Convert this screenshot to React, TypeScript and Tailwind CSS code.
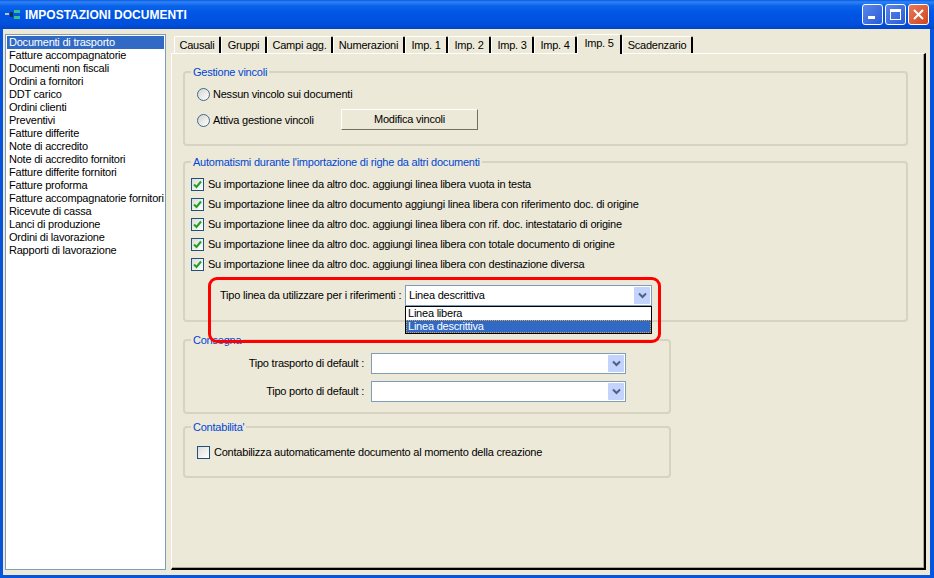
const docs = [
  "Documenti di trasporto", "Fatture accompagnatorie", "Documenti non fiscali", "Ordini a fornitori",
  "DDT carico", "Ordini clienti", "Preventivi", "Fatture differite", "Note di accredito",
  "Note di accredito fornitori", "Fatture differite fornitori", "Fatture proforma",
  "Fatture accompagnatorie fornitori", "Ricevute di cassa", "Lanci di produzione",
  "Ordini di lavorazione", "Rapporti di lavorazione",
];

const checks = [
  "Su importazione linee da altro doc. aggiungi linea libera vuota in testa",
  "Su importazione linee da altro documento aggiungi linea libera con riferimento doc. di origine",
  "Su importazione linee da altro doc. aggiungi linea libera con rif. doc. intestatario di origine",
  "Su importazione linee da altro doc. aggiungi linea libera con totale documento di origine",
  "Su importazione linee da altro doc. aggiungi linea libera con destinazione diversa",
];

const tabs: [string, number, boolean?][] = [
  ["Causali", 47], ["Gruppi", 46], ["Campi agg.", 66], ["Numerazioni", 72], ["Imp. 1", 43], ["Imp. 2", 43],
  ["Imp. 3", 43], ["Imp. 4", 43], ["Imp. 5", 45, true], ["Scadenzario", 71],
];

function Check({ checked = true }: { checked?: boolean }) {
  return (
    <span className="w-[13px] h-[13px] border border-[#1c5180] bg-gradient-to-br from-[#dcdcd7] to-white flex items-center justify-center shrink-0">
      {checked && (
        <svg width="9" height="9" viewBox="0 0 9 9">
          <path d="M1 4.5 L3.5 7 L8 1.5" fill="none" stroke="#21a121" strokeWidth="2" />
        </svg>
      )}
    </span>
  );
}

function Radio() {
  return <span className="w-[13px] h-[13px] rounded-full border border-[#3d6a92] bg-gradient-to-br from-[#d4d4cc] to-white shrink-0" />;
}

function Arrow() {
  return (
    <span className="w-[16px] h-[17px] bg-[#c3d3fb] rounded-[1px] flex items-center justify-center">
      <svg width="9" height="7" viewBox="0 0 9 7">
        <path d="M1 1.5 L4.5 5 L8 1.5" fill="none" stroke="#4d6185" strokeWidth="2" />
      </svg>
    </span>
  );
}

function Combo({ w, text }: { w: string; text?: string }) {
  return (
    <div className={`${w} h-[21px] border border-[#7f9db9] bg-white flex items-center justify-between pl-[3px] pr-[1px]`}>
      <span>{text}</span>
      <Arrow />
    </div>
  );
}

function Legend({ children }: { children: string }) {
  return <span className="absolute left-[6px] -top-[8px] bg-[#ece9d8] px-[2px] leading-[14px] text-[#0046d5] whitespace-nowrap">{children}</span>;
}

export default function App() {
  return (
    <div className="relative [font-family:'Liberation_Sans',Arial,sans-serif] w-[934px] h-[578px] overflow-hidden flex flex-col bg-[#0855dd] text-[11px] tracking-[-0.22px] text-black">
      <div className="h-[29px] shrink-0 flex items-center justify-between pl-[5px] pr-[5px] bg-[linear-gradient(to_bottom,#0a5ae0_0px,#2f83f5_2px,#0a62ea_6px,#0055e5_14px,#0050dc_24px,#0044c8_29px)]">
        <div className="flex items-center gap-[4px]">
          <svg width="16" height="12" viewBox="0 0 16 12">
            <rect x="0" y="4" width="4" height="2" fill="#b8c8d8" />
            <rect x="5" y="3" width="3" height="5" fill="#12304a" />
            <rect x="9" y="1" width="6" height="3" fill="#35c08a" />
            <rect x="9" y="7" width="6" height="3" fill="#35c08a" />
          </svg>
          <span className="text-white text-[12px] tracking-normal font-bold leading-none">IMPOSTAZIONI DOCUMENTI</span>
        </div>
        <div className="flex gap-[2px]">
          <div className="w-[21px] h-[21px] rounded-[3px] border border-white bg-gradient-to-br from-[#5a86ea] to-[#2a5bd8] flex items-end pl-[5px] pb-[5px]"><span className="w-[7px] h-[3px] bg-white" /></div>
          <div className="w-[21px] h-[21px] rounded-[3px] border border-white bg-gradient-to-br from-[#5a86ea] to-[#2a5bd8] flex items-center justify-center"><span className="w-[11px] h-[11px] border border-white border-t-[3px]" /></div>
          <div className="w-[21px] h-[21px] rounded-[3px] border border-white bg-gradient-to-br from-[#e8795a] to-[#cf4416] flex items-center justify-center">
            <svg width="11" height="11" viewBox="0 0 11 11"><path d="M1 1 L10 10 M10 1 L1 10" stroke="white" strokeWidth="2" /></svg>
          </div>
        </div>
      </div>

      <div className="h-[546px] ml-[3px] mr-[4px] bg-[#ece9d8] flex pl-[2px] pt-[5px] pb-[5px]">
        <div className="w-[161px] border border-[#7f9db9] bg-white p-[1px] leading-[13px] whitespace-nowrap overflow-hidden shrink-0">
          {docs.map((d, i) => (
            <div key={d} className={`h-[13px] pl-[2px] ${i === 0 ? "bg-[#316ac5] text-white" : ""}`}>{d}</div>
          ))}
        </div>

        <div className="ml-[5px] w-[755px] flex flex-col">
          <div className="h-[19px] flex pl-[3px] items-end">
            {tabs.map(([t, w, active]) => (
              <div key={t} style={{ width: w }} className={`flex items-center justify-center border-t border-l border-white border-r-2 border-r-black rounded-t-[2px] leading-none whitespace-nowrap ${active ? "relative z-10 h-[20px] -mb-px pb-[2px] bg-[#ece9d8]" : "h-[17px]"}`}>{t}</div>
            ))}
          </div>
          <div className="flex-1 border-t border-l border-white border-r-2 border-r-black border-b-2 border-b-black shadow-[inset_-1px_-1px_0_#aca899] pl-[11px] pt-[17px] flex flex-col items-start">
            <fieldset className="relative w-[725px] h-[75px] border-2 border-[#d6d3c2] rounded-[4px] pl-[12px] pt-[15px]">
              <Legend>Gestione vincoli</Legend>
              <div className="h-[13px] flex items-center gap-[3px]"><Radio /><span>Nessun vincolo sui documenti</span></div>
              <div className="mt-[8px] h-[21px] flex items-center">
                <div className="w-[144px] mt-[2px] flex items-center gap-[3px]"><Radio /><span>Attiva gestione vincoli</span></div>
                <button className="w-[137px] h-[21px] bg-[#ece9d8] border border-t-white border-l-white border-r-[#716f64] border-b-[#716f64] text-center">Modifica vincoli</button>
              </div>
            </fieldset>

            <fieldset className="relative mt-[15px] w-[725px] h-[161px] border-2 border-[#d6d3c2] rounded-[4px] pl-[6px] pt-[11px]">
              <Legend>Automatismi durante l'importazione di righe da altri documenti</Legend>
              {checks.map((c) => (
                <div key={c} className="h-[20px] flex items-center gap-[4px] whitespace-nowrap"><Check /><span>{c}</span></div>
              ))}
              <div className="mt-[11px] ml-[29px] flex items-center whitespace-nowrap">
                <span className="w-[180px] text-right">Tipo linea da utilizzare per i riferimenti :</span>
                <div className="relative ml-[5px] z-10">
                  <Combo w="w-[247px]" text="Linea descrittiva" />
                  <div className="absolute left-0 top-[21px] w-[247px] h-[28px] border border-black bg-white leading-[13px]">
                    <div className="h-[13px] pl-[2px]">Linea libera</div>
                    <div className="h-[13px] pl-[2px] bg-[#316ac5] text-white outline-1 -outline-offset-1 outline-dotted outline-[#e8a33a]">Linea descrittiva</div>
                  </div>
                </div>
              </div>
            </fieldset>

            <fieldset className="relative mt-[17px] w-[488px] h-[75px] border-2 border-[#d6d3c2] rounded-[4px] pt-[12px]">
              <Legend>Consegna</Legend>
              <div className="flex items-center justify-end pr-[43px] gap-[7px]"><span>Tipo trasporto di default :</span><Combo w="w-[255px]" /></div>
              <div className="flex items-center justify-end pr-[43px] gap-[7px] mt-[7px]"><span>Tipo porto di default :</span><Combo w="w-[255px]" /></div>
            </fieldset>

            <fieldset className="relative mt-[12px] w-[488px] h-[52px] border-2 border-[#d6d3c2] rounded-[4px] pl-[12px] pt-[16px]">
              <Legend>Contabilita'</Legend>
              <div className="flex items-center gap-[4px]"><Check checked={false} /><span>Contabilizza automaticamente documento al momento della creazione</span></div>
            </fieldset>
          </div>
        </div>
      </div>

      <div className="absolute z-20 left-[208px] top-[277px] w-[453px] h-[66px] border-[3px] border-[#ff0000] rounded-[9px] pointer-events-none" />
    </div>
  );
}
